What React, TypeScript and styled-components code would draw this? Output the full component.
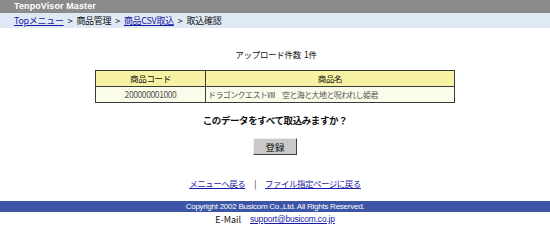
import React from "react";
import styled, { createGlobalStyle } from "styled-components";

const Global = createGlobalStyle`
  html, body { margin: 0; padding: 0; background: #ffffff; }
  body {
    font-family: "Noto Sans CJK JP", "Noto Sans", "Liberation Sans", sans-serif;
    font-size: 9px;
    color: #111;
  }
`;

const Page = styled.div`
  width: 550px;
  height: 236px;
  display: flex;
  flex-direction: column;
  overflow: hidden;
`;

const TitleBar = styled.div`
  height: 13px;
  background: #8b8b8b;
  color: #fff;
  font-family: "Liberation Sans", Arial, sans-serif;
  font-weight: bold;
  font-size: 9px;
  line-height: 13px;
  padding-left: 14px;
  letter-spacing: 0.1px;
`;

const Crumbs = styled.div`
  height: 15px;
  background: #dfe9f5;
  font-size: 9px;
  letter-spacing: -0.3px;
  line-height: 15px;
  padding-left: 14px;
  display: flex;
  gap: 4px;
  white-space: nowrap;
`;

const Link = styled.a`
  color: #1a1aa8;
  text-decoration: underline;
  cursor: pointer;
`;

const Main = styled.div`
  display: flex;
  flex-direction: column;
  align-items: center;
  padding-top: 19px;
`;

const Count = styled.div`
  font-size: 8.5px;
  letter-spacing: -0.3px;
  line-height: 14px;
  height: 14px;
  padding-left: 2px;
`;

const Table = styled.table`
  margin-top: 9px;
  width: 360px;
  border-collapse: collapse;
  font-size: 8.5px;
`;

const Th = styled.th<{ $w?: number }>`
  background: #f7f1a3;
  border: 1px solid #3a3a3a;
  font-weight: normal;
  height: 15px;
  line-height: 15px;
  padding: 0;
  letter-spacing: -0.3px;
  width: ${(p) => (p.$w ? `${p.$w}px` : "auto")};
`;

const Td = styled.td<{ $center?: boolean; $tight?: boolean }>`
  background: #fbfbea;
  border: 1px solid #3a3a3a;
  height: 15px;
  line-height: 15px;
  padding: 0 2px;
  color: #555;
  font-size: ${(p) => (p.$tight ? "8px" : "8.5px")};
  letter-spacing: ${(p) => (p.$tight ? "-0.6px" : "-0.4px")};
  text-align: ${(p) => (p.$center ? "center" : "left")};
  white-space: nowrap;
`;

const Question = styled.div`
  margin-top: 10px;
  font-weight: bold;
  font-size: 9.5px;
  letter-spacing: -0.4px;
  line-height: 14px;
`;

const Button = styled.button`
  margin-top: 11px;
  width: 44px;
  height: 17px;
  padding: 0;
  background: #c9c9c9;
  border: 1px solid;
  border-color: #f0f0f0 #404040 #404040 #f0f0f0;
  font-family: inherit;
  font-size: 9.5px;
  line-height: 14px;
  color: #111;
`;

const Nav = styled.div`
  margin-top: 21px;
  display: flex;
  gap: 9px;
  font-size: 8.5px;
  letter-spacing: -0.5px;
  line-height: 14px;
`;

const Footer = styled.div`
  margin-top: 11px;
  height: 11px;
  background: #3c55a6;
  color: #fff;
  font-family: "Liberation Sans", Arial, sans-serif;
  font-size: 8px;
  line-height: 11px;
  text-align: center;
  letter-spacing: -0.25px;
`;

const Mail = styled.div`
  display: flex;
  justify-content: center;
  gap: 9px;
  font-size: 9px;
  line-height: 13px;
  margin-top: 1px;
`;

const MailLink = styled(Link)`
  font-family: "Liberation Sans", Arial, sans-serif;
  font-size: 8.5px;
  letter-spacing: -0.2px;
`;

export default function App() {
  return (
    <>
      <Global />
      <Page>
        <TitleBar>TenpoVisor Master</TitleBar>
        <Crumbs>
          <Link>Topメニュー</Link>
          <span>&gt;</span>
          <span>商品管理</span>
          <span>&gt;</span>
          <Link>商品CSV取込</Link>
          <span>&gt;</span>
          <span>取込確認</span>
        </Crumbs>
        <Main>
          <Count>アップロード件数&nbsp;&nbsp;1件</Count>
          <Table>
            <thead>
              <tr>
                <Th $w={109}>商品コード</Th>
                <Th>商品名</Th>
              </tr>
            </thead>
            <tbody>
              <tr>
                <Td $center>200000001000</Td>
                <Td $tight>ドラゴンクエストⅧ　空と海と大地と呪われし姫君</Td>
              </tr>
            </tbody>
          </Table>
          <Question>このデータをすべて取込みますか？</Question>
          <Button>登録</Button>
          <Nav>
            <Link>メニューへ戻る</Link>
            <span>|</span>
            <Link>ファイル指定ページに戻る</Link>
          </Nav>
        </Main>
        <Footer>Copyright 2002 Busicom Co.,Ltd. All Rights Reserved.</Footer>
        <Mail>
          <span>E-Mail</span>
          <MailLink>support@busicom.co.jp</MailLink>
        </Mail>
      </Page>
    </>
  );
}
